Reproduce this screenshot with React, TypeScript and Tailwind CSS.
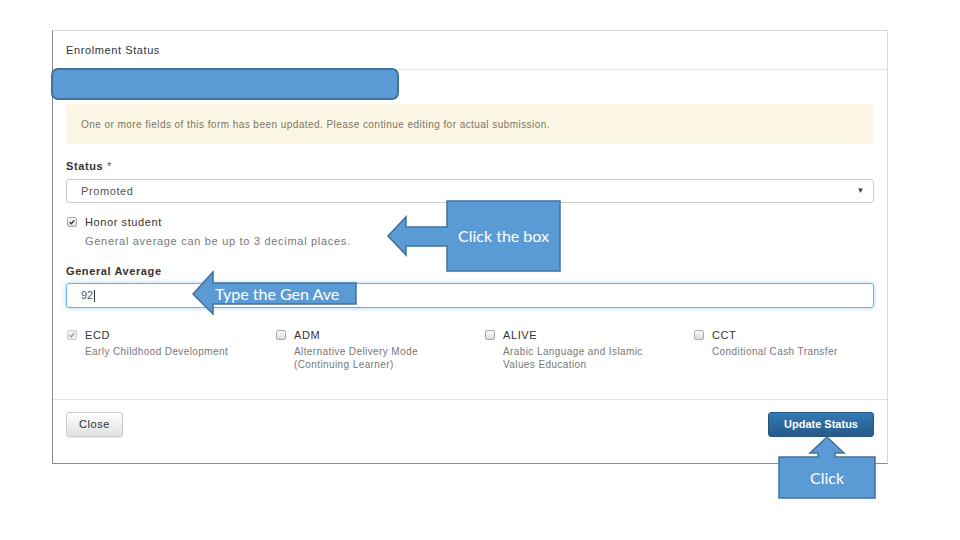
import React from "react";

function Box({ checked, disabled }: { checked?: boolean; disabled?: boolean }) {
  return (
    <span
      className={
        "flex h-[10px] w-[10px] items-center justify-center rounded-[2px] border " +
        (disabled ? "border-[#cfcfcf] bg-[#eeeeee]" : "border-[#a9a9a9] bg-gradient-to-b from-[#fafafa] to-[#dcdcdc]")
      }
    >
      {checked && (
        <svg viewBox="0 0 10 10" className="h-[8px] w-[8px]">
          <path
            d="M2 5.2 L4.1 7.2 L8 2.6"
            fill="none"
            stroke={disabled ? "#9a9a9a" : "#333"}
            strokeWidth="1.6"
          />
        </svg>
      )}
    </span>
  );
}

const programs = [
  { code: "ECD", desc: ["Early Childhood Development"], checked: true, disabled: true },
  { code: "ADM", desc: ["Alternative Delivery Mode", "(Continuing Learner)"] },
  { code: "ALIVE", desc: ["Arabic Language and Islamic", "Values Education"] },
  { code: "CCT", desc: ["Conditional Cash Transfer"] },
];

export default function App() {
  return (
    <div className="relative h-[540px] w-[960px] overflow-hidden bg-white pl-[52px] pt-[30px] font-['Liberation_Sans',Arial,sans-serif] text-[#333]">
      {/* modal */}
      <div className="h-[434px] w-[836px] border border-[#d8d8d8] border-b-[#8c8c8c] border-l-[#8c8c8c] bg-white">
        <div className="flex h-[39px] items-center border-b border-[#e5e5e5] px-[13px] text-[11px] tracking-[0.6px]">
          Enrolment Status
        </div>

        <div className="h-[329px] px-[13px] pt-[34px]">
          <div className="flex h-[40px] items-center rounded-[3px] bg-[#fcf7e4] px-[15px] text-[10px] tracking-[0.45px] text-[#7a7568]">
            One or more fields of this form has been updated. Please continue editing for actual submission.
          </div>

          <div className="mt-[16px] text-[11px] font-bold leading-[12px] tracking-[0.6px]">
            Status <span className="font-normal text-[#555]">*</span>
          </div>
          <div className="mt-[7px] flex h-[24px] items-center justify-between rounded-[3px] border border-[#ccc] pl-[14px] pr-[8px] text-[11px] tracking-[0.6px] text-[#555]">
            <span>Promoted</span>
            <span className="text-[8px] text-[#444]">▼</span>
          </div>

          <div className="mt-[13px] flex h-[12px] items-center text-[11px] tracking-[0.6px]">
            <span className="ml-[1px] mr-[8px]">
              <Box checked />
            </span>
            Honor student
          </div>
          <div className="mt-[7px] pl-[19px] text-[11px] leading-[12px] tracking-[0.7px] text-[#777]">
            General average can be up to 3 decimal places.
          </div>

          <div className="mt-[18px] text-[11px] font-bold leading-[12px] tracking-[0.6px]">General Average</div>
          <div className="mt-[6px] flex h-[25px] items-center rounded-[3px] border border-[#66afe9] pl-[14px] text-[11px] text-[#555] shadow-[0_0_5px_rgba(102,175,233,0.55)]">
            92<span className="ml-[1px] h-[12px] w-[1px] bg-[#333]" />
          </div>

          <div className="mt-[21px] grid grid-cols-[209px_209px_209px_1fr]">
            {programs.map((p) => (
              <div key={p.code}>
                <div className="flex h-[12px] items-center text-[11px] tracking-[0.6px]">
                  <span className="ml-[1px] mr-[8px]">
                    <Box checked={p.checked} disabled={p.disabled} />
                  </span>
                  {p.code}
                </div>
                <div className="mt-[4px] pl-[19px] text-[10px] leading-[13px] tracking-[0.4px] text-[#777]">
                  {p.desc.map((d) => (
                    <div key={d}>{d}</div>
                  ))}
                </div>
              </div>
            ))}
          </div>
        </div>

        <div className="flex items-start justify-between border-t border-[#e5e5e5] px-[13px] pt-[12px]">
          <button className="h-[25px] w-[57px] rounded-[3px] border border-[#ccc] bg-gradient-to-b from-white to-[#e0e0e0] text-[11px] tracking-[0.6px] text-[#333] shadow-[0_1px_1px_rgba(0,0,0,0.08)]">
            Close
          </button>
          <button className="h-[25px] w-[106px] rounded-[3px] border border-[#245580] bg-gradient-to-b from-[#337ab7] to-[#265a88] text-[11px] font-bold text-white">
            Update Status
          </button>
        </div>
      </div>

      {/* redaction block over the student name */}
      <div className="absolute left-[51px] top-[68px] h-[32px] w-[348px] rounded-[7px] border-2 border-[#41719c] bg-[#5b9bd5]" />

      {/* tutorial callouts */}
      <svg className="pointer-events-none absolute left-0 top-0" width="960" height="540">
        <g fill="#5b9bd5" stroke="#41719c" strokeWidth="1.5">
          <path d="M447 201 H560 V271 H447 V246 H406 V255 L388 236 L406 217 V227 H447 Z" />
          <path d="M213 283 H356 V304 H213 V314 L193 294 L213 272 Z" />
          <path d="M779 457 H818 V453 H810 L827 437 L844 453 H835 V457 H875 V498 H779 Z" />
        </g>
      </svg>
      <div className="absolute left-[447px] top-[201px] flex h-[70px] w-[113px] items-center justify-center font-['Lato',sans-serif] text-[16px] text-white">
        Click the box
      </div>
      <div className="absolute left-[213px] top-[283px] flex h-[21px] w-[143px] items-center pl-[2px] font-['Lato',sans-serif] text-[16px] text-white">
        Type the Gen Ave
      </div>
      <div className="absolute left-[779px] top-[457px] flex h-[41px] w-[96px] items-center justify-center font-['Lato',sans-serif] text-[16px] text-white">
        Click
      </div>
    </div>
  );
}
